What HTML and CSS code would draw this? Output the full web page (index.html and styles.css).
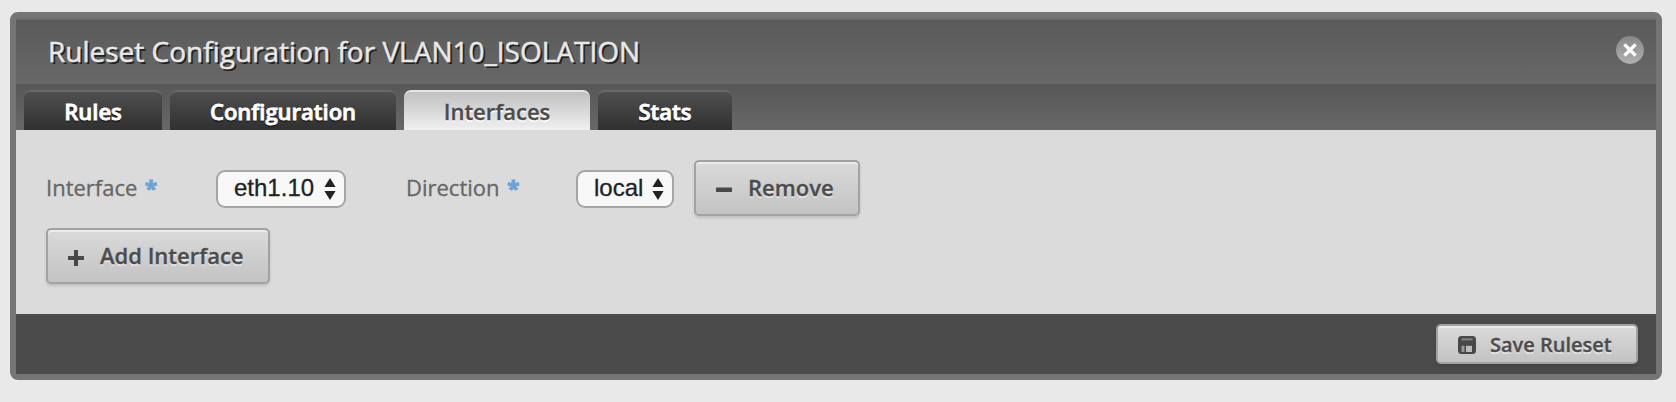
FILE: index.html
```html
<!DOCTYPE html>
<html lang="en">
<head>
<meta charset="utf-8">
<title>Ruleset Configuration</title>
<link rel="stylesheet" href="styles.css">
</head>
<body>
<section class="dialog">
  <header class="header">
    <h1 class="title">Ruleset Configuration for VLAN10_ISOLATION</h1>
    <span class="close" role="button" aria-label="Close">
      <svg width="28" height="28" viewBox="0 0 28 28">
        <defs><linearGradient id="disc" x1="0" y1="0" x2="0" y2="1"><stop offset="0" stop-color="#888"/><stop offset="1" stop-color="#b0b0b0"/></linearGradient></defs>
        <circle cx="14" cy="14" r="13.9" fill="url(#disc)"/>
        <path d="M9.6 9.6l8.8 8.8M18.4 9.6l-8.8 8.8" stroke="#fff" stroke-width="3.4" stroke-linecap="square"/>
      </svg>
    </span>
  </header>
  <nav class="tabs">
    <span class="tab rules">Rules</span>
    <span class="tab config">Configuration</span>
    <span class="tab interfaces active">Interfaces</span>
    <span class="tab stats">Stats</span>
  </nav>
  <main class="content">
    <div class="row">
      <span class="label first">Interface <b class="star">*</b></span>
      <span class="select wide">eth1.10<svg class="arrows" width="12" height="22" viewBox="0 0 12 22"><path d="M6 0l5.6 9H.4zM6 22l5.6-9H.4z" fill="#222"/></svg></span>
      <span class="label second">Direction <b class="star">*</b></span>
      <span class="select narrow">local<svg class="arrows" width="12" height="22" viewBox="0 0 12 22"><path d="M6 0l5.6 9H.4zM6 22l5.6-9H.4z" fill="#222"/></svg></span>
      <span class="button remove" role="button"><svg class="icon" width="18" height="18" viewBox="0 0 18 18"><rect x="1" y="8.5" width="16" height="4.6" rx=".6" fill="#484848"/></svg><span class="caption">Remove</span></span>
    </div>
    <span class="button add" role="button"><svg class="icon" width="18" height="18" viewBox="0 0 18 18"><path d="M7 1h4v6h6v4h-6v6H7v-6H1V7h6z" fill="#484848"/></svg><span class="caption">Add Interface</span></span>
  </main>
  <footer class="footer">
    <span class="button save" role="button"><svg class="icon" width="18" height="18" viewBox="0 0 18 18"><rect width="18" height="18" rx="3.5" fill="#484848"/><rect x="3.5" y="2.4" width="11" height="2" fill="#858585"/><rect x="3.5" y="9.8" width="3" height="6.2" fill="#999"/><rect x="8" y="9.8" width="6" height="6.2" fill="#bbb"/></svg><span class="caption">Save Ruleset</span></span>
  </footer>
</section>
</body>
</html>
```
FILE: styles.css
```css
* { box-sizing: border-box; }
body {
  margin: 0;
  padding: 12px 14px 22px 10px;
  background: #e9e9e9;
  font-family: "Open Sans", sans-serif;
  white-space: nowrap;
}
.dialog {
  width: 1652px;
  height: 368px;
  border: 6px solid #757575;
  border-radius: 8px;
  background: #dbdbdb;
}
.header {
  display: flex;
  justify-content: space-between;
  height: 66px;
  padding: 0 12px 0 32px;
  border-top: 2px solid #6b6b6b;
  background: linear-gradient(#5a5a5a, #686868);
}
.title {
  margin: 0;
  font-size: 28px;
  font-weight: 400;
  line-height: 62px;
  color: #e8e8e8;
  -webkit-text-stroke: .5px #e8e8e8;
  text-shadow: 2px 2px 0 #222;
}
.close { height: 28px; margin-top: 16px; }
.close svg { display: block; }
.tabs {
  display: flex;
  gap: 8px;
  height: 46px;
  padding: 6px 8px 0;
  background: linear-gradient(#575757, #686868);
}
.tab {
  height: 40px;
  border-top: 2px solid #696969;
  border-radius: 7px 7px 0 0;
  background: linear-gradient(#4f4f4f, #303030);
  color: #fff;
  font-size: 22px;
  font-weight: 600;
  line-height: 38px;
  text-align: center;
  -webkit-text-stroke: .8px #fff;
  text-shadow: 0 2px 1px #1c1c1c;
}
.rules { width: 138px; }
.config { width: 226px; }
.interfaces { width: 186px; }
.stats { width: 134px; }
.active {
  border-top-color: #e6e6e6;
  background: linear-gradient(#c0c0c0, #f0f0f0);
  color: #4c4c4c;
  -webkit-text-stroke: .3px #4c4c4c;
  text-shadow: 0 2px 1px #fff;
}
.content {
  height: 184px;
  padding: 30px;
}
.row {
  display: flex;
  align-items: center;
  height: 56px;
  margin-bottom: 12px;
}
.label {
  padding-bottom: 2px;
  font-size: 22px;
  line-height: 30px;
  color: #666;
  -webkit-text-stroke: .3px #666;
}
.first { width: 170px; }
.second { width: 170px; margin-left: 60px; }
.star {
  margin-left: 2px;
  color: #6ba3d6;
  -webkit-text-stroke: 1px #6ba3d6;
}
.select {
  display: flex;
  align-items: center;
  justify-content: space-between;
  height: 38px;
  margin-top: 2px;
  padding: 0 8px 2px 16px;
  border: 2px solid #a5a5a5;
  border-radius: 9px;
  background: #f8f8f8;
  color: #222;
  font-family: "Liberation Sans", sans-serif;
  font-size: 24px;
  -webkit-text-stroke: .3px #222;
}
.wide { width: 130px; }
.narrow { width: 98px; }
.arrows { position: relative; top: 1px; }
.button {
  display: flex;
  align-items: center;
  height: 56px;
  padding-left: 19px;
  border: 2px solid #a2a2a2;
  border-radius: 5px;
  background: linear-gradient(#dadada, #c3c3c3);
  box-shadow: inset 0 2px 0 #ebebeb, 0 2px 3px rgba(0, 0, 0, .13);
  color: #4c4c4c;
  font-size: 22px;
  font-weight: 600;
  line-height: 30px;
  -webkit-text-stroke: .3px #4c4c4c;
  text-shadow: 0 2px 0 #e5e5e5;
}
.icon { margin-right: 15px; }
.caption { padding-bottom: 2px; }
.remove { width: 166px; margin-left: 20px; }
.add { width: 224px; }
.add .icon { margin-top: 4px; }
.footer {
  display: flex;
  justify-content: flex-end;
  height: 60px;
  padding: 10px 18px;
  background: #4b4b4b;
}
.save {
  width: 202px;
  height: 40px;
  padding-left: 20px;
  font-size: 20px;
}
.save .icon { margin: 2px 14px 0 0; }
.save .caption { padding: 2px 0 0; }
```
